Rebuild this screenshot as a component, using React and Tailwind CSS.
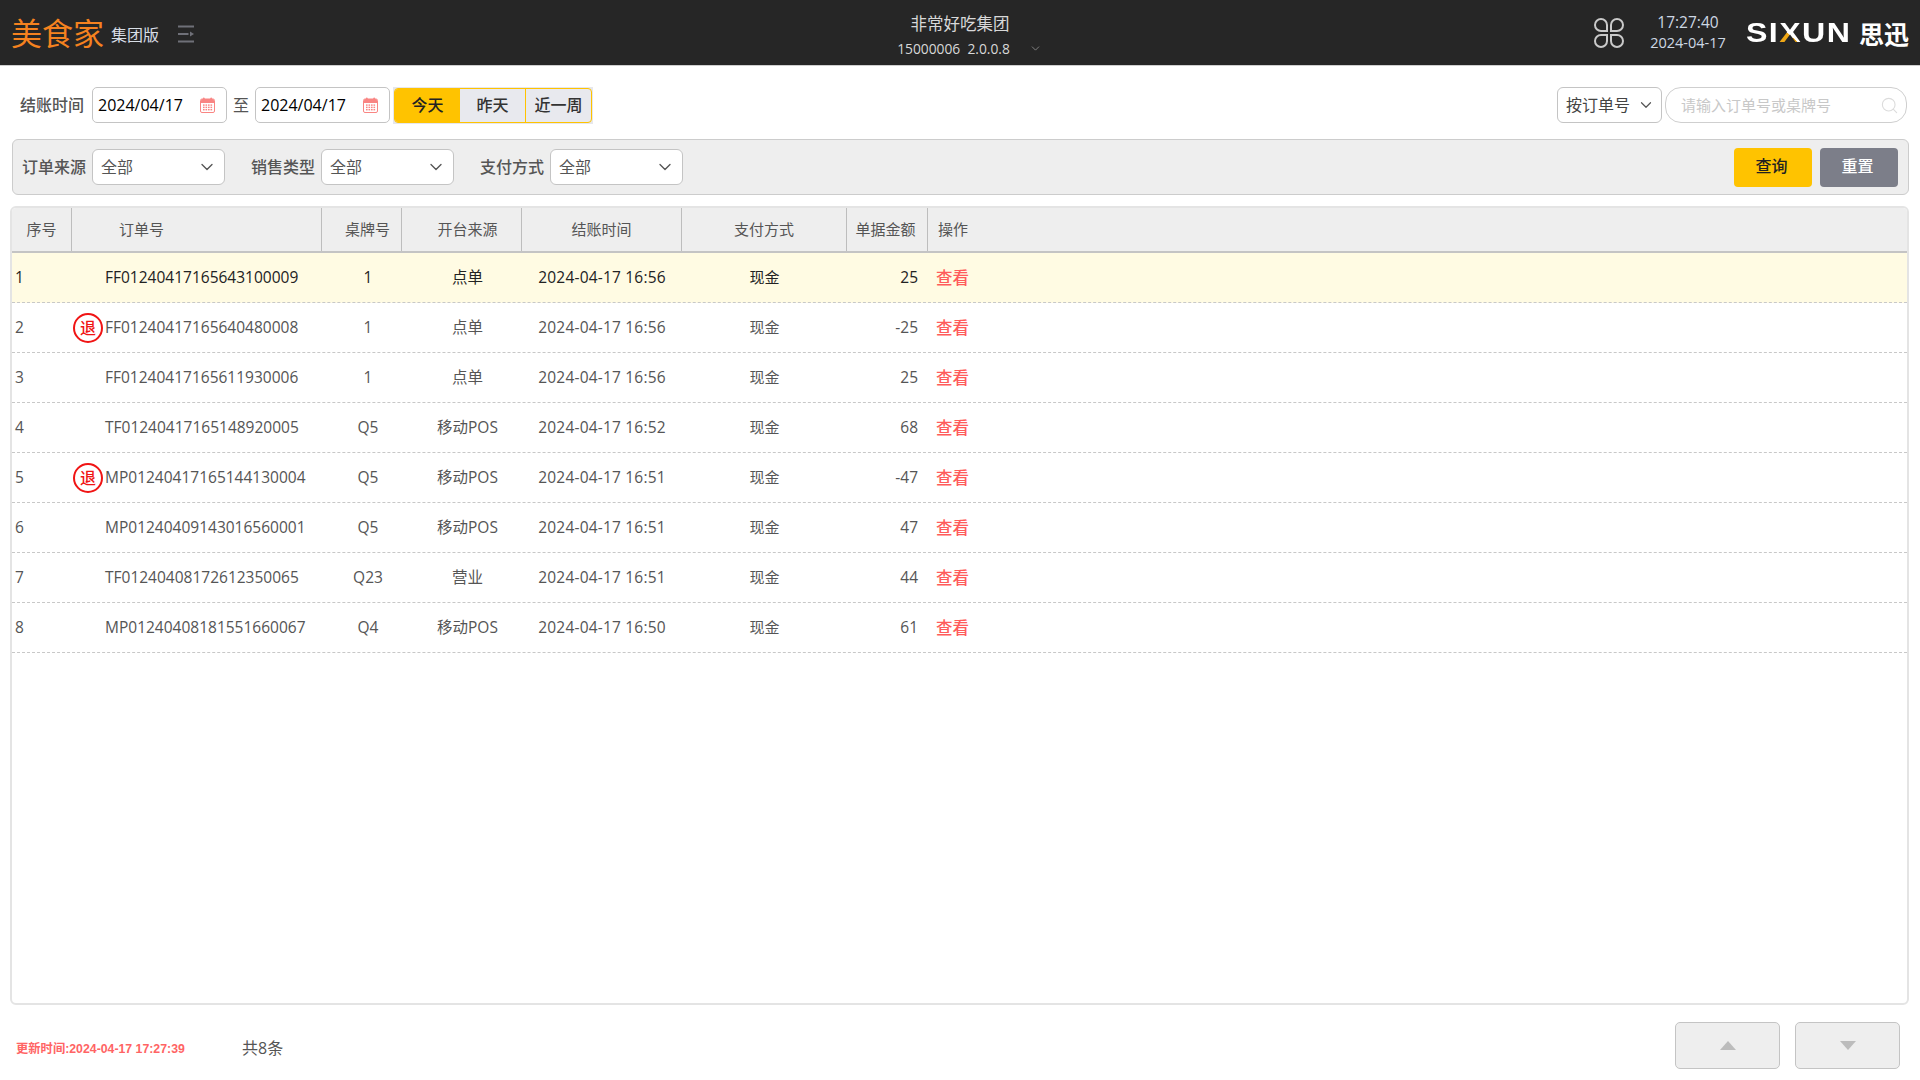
import React from "react";
import { ChevronDown, Search } from "lucide-react";

const rows = [
  { n: 1, id: "FF01240417165643100009", t: "1", s: "点单", d: "2024-04-17 16:56", a: "25", active: true },
  { n: 2, id: "FF01240417165640480008", t: "1", s: "点单", d: "2024-04-17 16:56", a: "-25", back: true },
  { n: 3, id: "FF01240417165611930006", t: "1", s: "点单", d: "2024-04-17 16:56", a: "25" },
  { n: 4, id: "TF01240417165148920005", t: "Q5", s: "移动POS", d: "2024-04-17 16:52", a: "68" },
  { n: 5, id: "MP01240417165144130004", t: "Q5", s: "移动POS", d: "2024-04-17 16:51", a: "-47", back: true },
  { n: 6, id: "MP01240409143016560001", t: "Q5", s: "移动POS", d: "2024-04-17 16:51", a: "47" },
  { n: 7, id: "TF01240408172612350065", t: "Q23", s: "营业", d: "2024-04-17 16:51", a: "44" },
  { n: 8, id: "MP01240408181551660067", t: "Q4", s: "移动POS", d: "2024-04-17 16:50", a: "61" },
];

const cols = "grid grid-cols-[60px_250px_80px_120px_160px_165px_81px_1fr]";

function Calendar() {
  const dots = [];
  for (let y = 0; y < 3; y++) for (let x = 0; x < 4; x++) dots.push(<rect key={x + "-" + y} x={3 + x * 2.5} y={7.4 + y * 2.3} width="1.6" height="1.4" fill="#f98583" />);
  return (
    <svg width="15" height="16" viewBox="0 0 15 16" className="shrink-0">
      <rect x="0.5" y="2" width="14" height="13.5" rx="1.5" fill="#fff" stroke="#f98583" />
      <path d="M1 3.5a1.5 1.5 0 0 1 1.5-1.5h10a1.5 1.5 0 0 1 1.5 1.5V6H1z" fill="#f98583" />
      <rect x="3" y="0.5" width="1.6" height="3" rx=".8" fill="#f98583" />
      <rect x="10.4" y="0.5" width="1.6" height="3" rx=".8" fill="#f98583" />
      {dots}
    </svg>
  );
}

function DateBox({ v }) {
  return (
    <div className="w-[135px] h-[36px] border border-[#c4c4c4] rounded-[5px] bg-white flex items-center justify-between pl-[5px] pr-[11px] text-[16px] text-black">
      <span>{v}</span>
      <Calendar />
    </div>
  );
}

function Select({ w = "w-[133px]" }) {
  return (
    <div className={w + " h-[36px] border border-[#c4c4c4] rounded-[6px] bg-white flex items-center justify-between pl-[8px] pr-[7px] text-[16px] text-[#555]"}>
      <span>全部</span>
      <ChevronDown size={20} strokeWidth={1.6} color="#555" />
    </div>
  );
}

function Field({ label }) {
  return (
    <div className="flex items-center gap-[6px]">
      <span className="text-[16px] text-[#555] font-medium">{label}</span>
      <Select />
    </div>
  );
}

function Head({ children, className = "" }) {
  return <div className={"h-full flex items-center border-r border-[#bdbdbd] text-[15px] text-[#555] " + className}>{children}</div>;
}

function Cell({ children, className = "" }) {
  return <div className={"h-full flex items-center " + className}>{children}</div>;
}

export default function App() {
  return (
    <div className="w-[1920px] h-[1080px] overflow-hidden bg-white flex flex-col font-['Open_Sans','Noto_Sans_CJK_SC',sans-serif]">
      <header className="h-[66px] shrink-0 bg-[#262626] border-b border-[#cfcfcf] flex items-center">
        <div className="flex-1 flex items-center pl-[11px]">
          <span className="text-[31px] leading-[40px] font-normal text-[#f5821f]">美食家</span>
          <span className="ml-[7px] mt-[5px] text-[16px] text-[#d8dee6]">集团版</span>
          <svg width="16" height="18" viewBox="0 0 16 18" className="ml-[19px] mt-[3px]">
            <rect x="0" y="0.5" width="16" height="2" fill="#6f7078" />
            <rect x="0" y="8" width="10.5" height="2" fill="#6f7078" />
            <path d="M12 6.5l4 2.5-4 2.5z" fill="#6f7078" />
            <rect x="0" y="15.5" width="16" height="2" fill="#6f7078" />
          </svg>
        </div>
        <div className="w-[200px] flex flex-col items-center text-[#d8d8d8] pt-[6px]">
          <div className="text-[16.5px] leading-[22px]">非常好吃集团</div>
          <div className="flex items-center gap-[19px] pl-[19px] mt-[4px] text-[13.8px] leading-[20px] whitespace-pre">
            <span>15000006  2.0.0.8</span>
            <ChevronDown size={13} strokeWidth={1.4} color="#9a9a9a" />
          </div>
        </div>
        <div className="flex-1 flex items-center justify-end pr-[11px]">
          <svg width="30" height="30" viewBox="0 0 30 30" fill="none" stroke="#c9c9c9" strokeWidth="2">
            <path d="M13 13H7a6 6 0 1 1 6-6z" />
            <path d="M17 13H23a6 6 0 1 0-6-6z" />
            <path d="M13 17H7a6 6 0 1 0 6 6z" />
            <path d="M17 17H23a6 6 0 1 1-6 6z" />
          </svg>
          <div className="w-[80px] ml-[24px] text-center text-[#cdd7e3]">
            <div className="text-[15.5px] leading-[20px] -mt-[1px] mb-[1px]">17:27:40</div>
            <div className="text-[14.5px] leading-[20px]">2024-04-17</div>
          </div>
          <div className="ml-[18px] flex items-center text-white font-['Liberation_Sans',sans-serif] font-bold">
            <span className="text-[27px] leading-[30px] tracking-[1.2px] scale-x-[1.19] origin-left w-[113px] whitespace-nowrap">
              SI<span className="bg-[linear-gradient(45deg,#f0a816_44%,#fff_44%)] bg-clip-text text-transparent">X</span>UN
            </span>
            <span className="text-[25px] leading-[30px] font-bold font-['Noto_Sans_CJK_SC',sans-serif]">思迅</span>
          </div>
        </div>
      </header>

      <section className="flex items-center h-[36px] mt-[21px] pl-[20px] pr-[13px]">
        <span className="w-[72px] text-[16px] text-[#555] font-medium">结账时间</span>
        <DateBox v="2024/04/17" />
        <span className="w-[28px] text-center text-[16px] text-[#555]">至</span>
        <DateBox v="2024/04/17" />
        <div className="ml-[3px] h-[37px] w-[200px] bg-[#e6e7ec] p-[1px]">
          <div className="h-full flex rounded-[4px] border border-[#ffc300] bg-[#e8e9ee] overflow-hidden text-[16px] font-medium text-[#333]">
            <div className="w-[65px] bg-[#ffc300] text-[#222] flex items-center justify-center">今天</div>
            <div className="w-[66px] border-r border-[#ffc300] flex items-center justify-center">昨天</div>
            <div className="flex-1 flex items-center justify-center">近一周</div>
          </div>
        </div>
        <div className="ml-auto w-[105px] h-[36px] border border-[#c4c4c4] rounded-[6px] flex items-center justify-between pl-[8px] pr-[6px] text-[16px] text-[#444]">
          <span>按订单号</span>
          <ChevronDown size={18} strokeWidth={1.6} color="#555" />
        </div>
        <div className="ml-[3px] w-[242px] h-[36px] border border-[#cfcfcf] rounded-[16px] flex items-center justify-between pl-[15px] pr-[7px] text-[15px] text-[#c8c8c8]">
          <span>请输入订单号或桌牌号</span>
          <Search size={19} strokeWidth={1.4} color="#dcdcdc" />
        </div>
      </section>

      <section className="ml-[12px] mr-[11px] mt-[16px] h-[56px] shrink-0 bg-[#eeeeee] border border-[#cccccc] rounded-[6px] flex items-center pl-[9px] pr-[10px]">
        <div className="flex items-center gap-[26px]">
          <Field label="订单来源" />
          <Field label="销售类型" />
          <Field label="支付方式" />
        </div>
        <div className="ml-auto flex items-center gap-[8px]">
          <button className="w-[78px] h-[39px] pr-[3px] pb-[2px] rounded-[4px] bg-[#ffc300] text-[16px] font-medium text-[#222]">查询</button>
          <button className="w-[78px] h-[39px] pr-[3px] pb-[2px] rounded-[4px] bg-[#7c7e89] text-[16px] font-medium text-white">重置</button>
        </div>
      </section>

      <section className="ml-[10px] mr-[11px] mt-[11px] h-[799px] shrink-0 border-2 border-[#e4e4e4] rounded-[6px] overflow-hidden">
        <div className={cols + " h-[45px] bg-[#eeeeee] border-b-2 border-[#c4c4c4]"}>
          <Head className="justify-center">序号</Head>
          <Head className="pl-[47px]">订单号</Head>
          <Head className="justify-center pl-[12px]">桌牌号</Head>
          <Head className="justify-center pl-[12px]">开台来源</Head>
          <Head className="justify-center">结账时间</Head>
          <Head className="justify-center">支付方式</Head>
          <Head className="justify-center pr-[3px]">单据金额</Head>
          <div className="flex items-center pl-[10px] text-[15px] text-[#555]">操作</div>
        </div>
        {rows.map((r) => (
          <div
            key={r.n}
            className={cols + " h-[50px] border-b border-dashed border-[#c8c8c8] text-[15.5px] " + (r.active ? "bg-[#fffbe3] text-[#222]" : "text-[#555]")}
          >
            <Cell className="pl-[3px]">{r.n}</Cell>
            <Cell className="pl-[1px]">
              <span className="w-[32px] shrink-0">
                {r.back && (
                  <span className="w-[30px] h-[30px] rounded-full border-2 border-[#f01414] text-[#f01414] text-[16px] font-medium flex items-center justify-center">退</span>
                )}
              </span>
              <span className="whitespace-nowrap">{r.id}</span>
            </Cell>
            <Cell className="justify-center pl-[12px]">{r.t}</Cell>
            <Cell className="justify-center pl-[11px] text-[15.5px]">{r.s}</Cell>
            <Cell className="justify-center tracking-[0.2px]">{r.d}</Cell>
            <Cell className="justify-center text-[15px]">现金</Cell>
            <Cell className="justify-end pr-[10px]">{r.a}</Cell>
            <Cell className="pl-[8px] pt-[2px] text-[16.5px] font-medium text-[#ff5b5b]">查看</Cell>
          </div>
        ))}
      </section>

      <footer className="mt-[17px] pl-[16px] pr-[20px] h-[47px] shrink-0 flex items-center">
        <span className="w-[226px] mt-[7px] text-[12.3px] font-bold text-[#ff6464] font-['Liberation_Sans','Noto_Sans_CJK_SC',sans-serif]">更新时间:2024-04-17 17:27:39</span>
        <span className="mt-[5px] text-[16px] text-[#555]">共8条</span>
        <div className="ml-auto flex gap-[15px]">
          <button className="w-[105px] h-[47px] bg-[#eeeeee] border border-[#c4c4c4] rounded-[5px] flex items-center justify-center">
            <svg width="16" height="9" viewBox="0 0 16 9"><path d="M8 0l8 9H0z" fill="#bcbcbc" /></svg>
          </button>
          <button className="w-[105px] h-[47px] bg-[#eeeeee] border border-[#c4c4c4] rounded-[5px] flex items-center justify-center">
            <svg width="16" height="9" viewBox="0 0 16 9"><path d="M0 0h16L8 9z" fill="#bcbcbc" /></svg>
          </button>
        </div>
      </footer>
    </div>
  );
}
